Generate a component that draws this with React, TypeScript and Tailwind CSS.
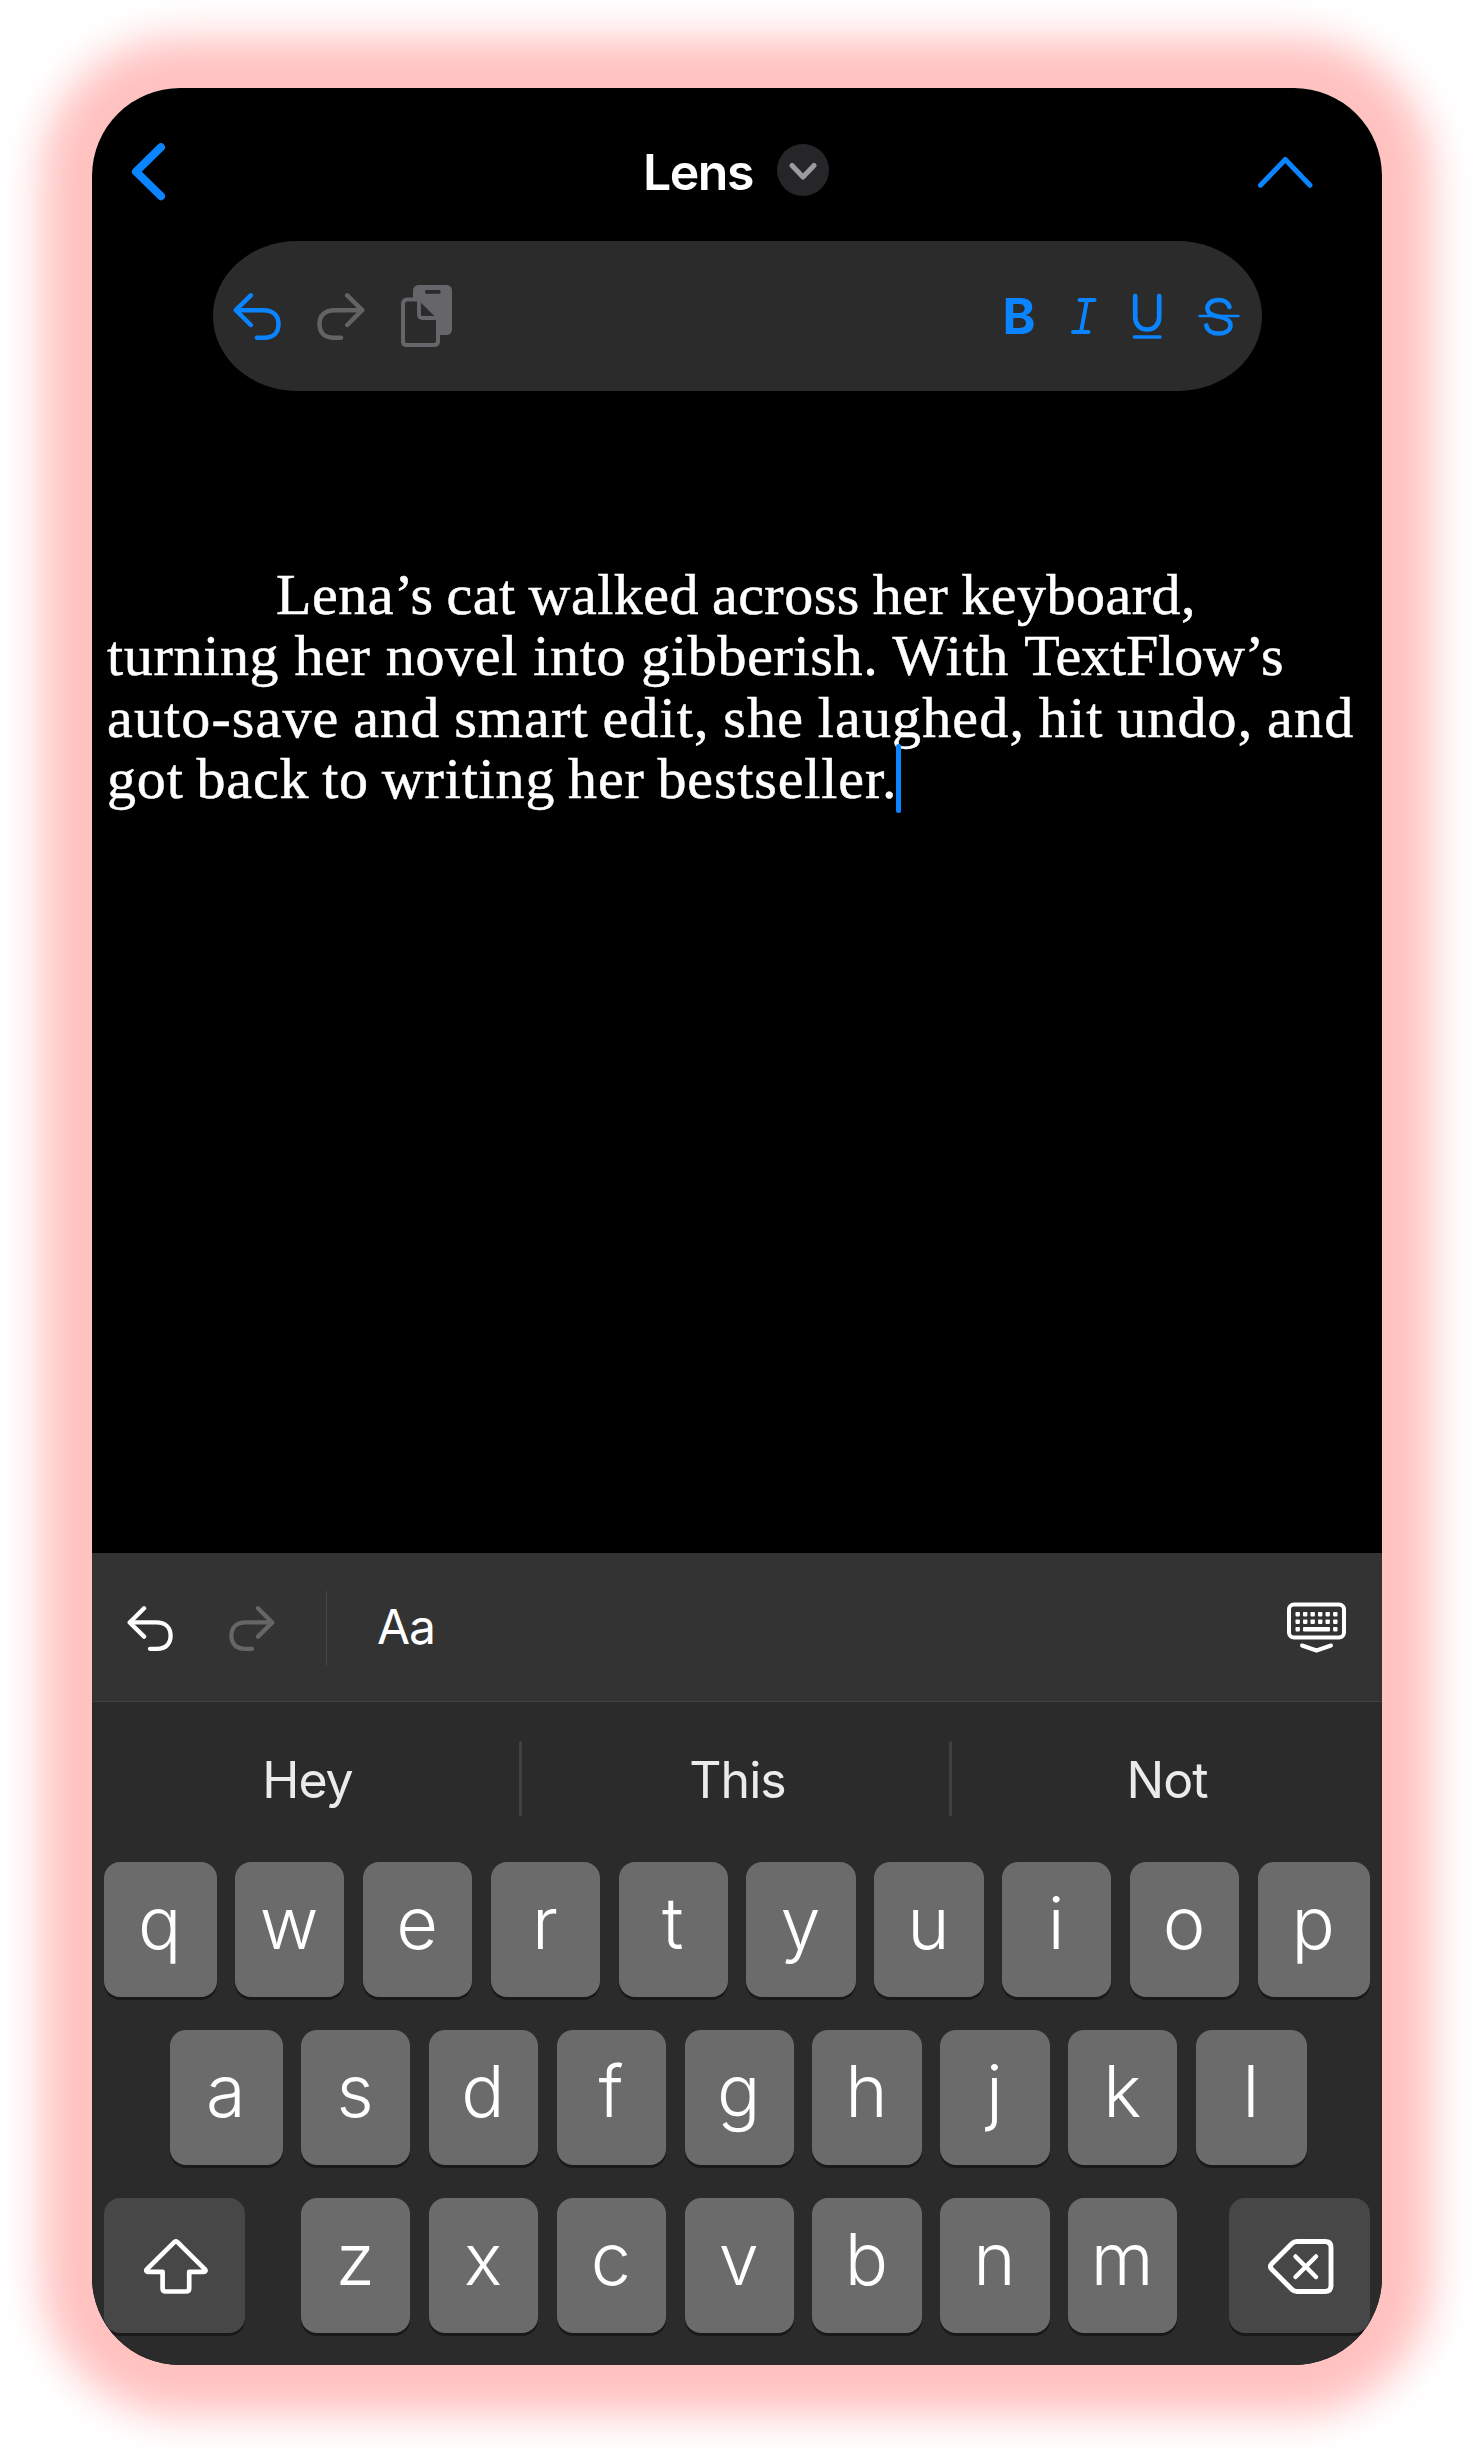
import type { ReactNode } from "react";

const BLUE = "#0a84ff";

function UndoArrow({ className, stroke, flip = false }: { className: string; stroke: string; flip?: boolean }) {
  return (
    <svg
      viewBox="0 0 48 48"
      className={className}
      fill="none"
      stroke={stroke}
      strokeWidth="4.5"
      strokeLinecap="round"
      strokeLinejoin="round"
    >
      <g transform={flip ? "matrix(-1 0 0 1 48 0)" : undefined}>
        <path d="M17.8 3.4 2.8 18.2l15 14.8" />
        <path d="M3.5 18.2h27c9.5 0 15 5.500 15 13.700s-4.800 13.800-14.300 13.800h-7.200" />
      </g>
    </svg>
  );
}

function ClipboardDocs() {
  return (
    <svg viewBox="0 0 51 64" className="h-[64px] w-[51px]" fill="none" strokeLinejoin="round">
      <rect x="12" y="1" width="39" height="50" rx="5.500" fill="#65656a" />
      <rect x="24" y="6" width="15.500" height="3.800" rx="1.500" fill="#2b2b2b" />
      <path
        d="M6.500 15.500H18L37 34v24.500q0 3.500-3.500 3.500h-27Q2 62 2 58.500v-39q0-4 4.500-4z"
        fill="#2b2b2b"
      />
      <path
        d="M17.800 15.500H6.500Q2 15.500 2 20v37.500Q2 61 6 61h27q4 0 4-4V34.500"
        stroke="#65656a"
        strokeWidth="4"
      />
      <path d="M18 15v15.500q0 3.500 3.500 3.500H37" stroke="#65656a" strokeWidth="3.800" />
      <path d="M18 15.500 37 34" stroke="#65656a" strokeWidth="2" />
    </svg>
  );
}

function FormatIcons() {
  const common = {
    fill: "none",
    stroke: BLUE,
    strokeLinecap: "round" as const,
    strokeLinejoin: "round" as const,
  };
  return (
    <>
      <svg viewBox="0 0 26 50" className="ml-[35px] h-[50px] w-[26px]" {...common} strokeWidth="4">
        <path d="M8.500 9H23.500M2 41H17.500M16 9 10 41" />
      </svg>
      <svg viewBox="0 0 30 50" className="ml-[35px] h-[50px] w-[30px]" {...common} strokeWidth="4.700">
        <path d="M3.200 5v21c0 7 4.500 12.500 12 12.500s12-5.500 12-12.500V5" />
        <path d="M2.500 46h25.500" strokeWidth="3.600" />
      </svg>
      <svg viewBox="0 0 42 50" className="ml-[36px] h-[50px] w-[42px]" {...common} strokeWidth="4.500">
        <path d="M31.500 16C30 11.500 26 9 20.500 9 14 9 9.300 12.500 9.300 17.500c0 4.500 3.500 6.500 9.500 7.800l4 .8c6.500 1.400 9.700 3.700 9.700 8.100 0 5-4.800 8.400-12 8.400-6.300 0-11.200-3-12.200-8.200" />
        <path d="M1.500 25h39" strokeWidth="2.400" />
      </svg>
    </>
  );
}

function KeyboardDismiss() {
  const columns = [8.500, 16, 23.500, 31, 38.500, 46.100];
  return (
    <svg viewBox="0 0 59 52" className="h-[52px] w-[59px]" fill="none">
      <rect x="2" y="2.500" width="55" height="33" rx="5" stroke="#fff" strokeWidth="4" />
      {columns.map((x) => (
        <g key={x} fill="#fff">
          <rect x={x} y="10" width="4.400" height="4.400" rx=".8" />
          <rect x={x} y="17.500" width="4.400" height="4.400" rx=".8" />
        </g>
      ))}
      <g fill="#fff">
        <rect x="8.500" y="25" width="4.400" height="4.400" rx=".8" />
        <rect x="16" y="25" width="27" height="4.400" rx=".8" />
        <rect x="46.100" y="25" width="4.400" height="4.400" rx=".8" />
      </g>
      <path d="m15 43.500 14.500 5 14.500-5" stroke="#fff" strokeWidth="4" strokeLinecap="round" strokeLinejoin="round" />
    </svg>
  );
}

function ShiftIcon() {
  return (
    <svg
      viewBox="0 0 64 55"
      className="h-[55px] w-[64px]"
      fill="none"
      stroke="#fff"
      strokeWidth="4.700"
      strokeLinejoin="round"
    >
      <path d="M30.300 3.200 3 30.200c-1.300 1.400-.8 2.600.8 2.600h14.800v16.400q0 3.300 3.300 3.300h20q3.300 0 3.300-3.300V32.800H60c1.600 0 2.100-1.200.8-2.600L33.500 3.200q-1.600-1.500-3.200 0z" />
    </svg>
  );
}

function DeleteIcon() {
  return (
    <svg
      viewBox="0 0 66 55"
      className="h-[55px] w-[66px]"
      fill="none"
      stroke="#fff"
      strokeWidth="4.900"
      strokeLinecap="round"
      strokeLinejoin="round"
    >
      <path d="M29 2.500h28q6 0 6 6v38q0 6-6 6H29q-3 0-5-2L3.500 30q-2.200-2.500 0-5L24 4.500q2-2 5-2z" />
      <path d="m27.500 17.500 20.500 20.500m0-20.500L27.500 38" strokeWidth="4.500" />
    </svg>
  );
}

function Key({ children, size = "w-[109.35px]" }: { children: ReactNode; size?: string }) {
  return (
    <button
      className={`${size} flex h-[135px] shrink-0 justify-center rounded-[16px] bg-[#6b6b6b] pt-[17px] pr-[1px] text-[72px] leading-[87px] font-[340] text-white shadow-[0_3px_0_#191919]`}
    >
      {children}
    </button>
  );
}

function ActionKey({ children, className }: { children: ReactNode; className: string }) {
  return (
    <button
      className={`${className} flex h-[135px] w-[141px] shrink-0 rounded-[16px] bg-[#474747] shadow-[0_3px_0_#191919]`}
    >
      {children}
    </button>
  );
}

function Header() {
  return (
    <header className="flex h-[153px] items-start">
      <svg
        viewBox="0 0 35 60"
        className="mt-[53px] ml-[39px] h-[60px] w-[35px]"
        fill="none"
        stroke={BLUE}
        strokeWidth="8"
        strokeLinecap="round"
        strokeLinejoin="round"
      >
        <path d="M30 6.200 5 30.700l25 24.500" />
      </svg>
      <h1 className="mt-[54px] ml-[477px] w-[134px] text-[50px] leading-[60px] font-semibold tracking-[-1.5px] text-white">
        Lens
      </h1>
      <span className="mt-[56px] flex size-[52px] items-center justify-center rounded-full bg-[#262628]">
        <svg
          viewBox="0 0 30 20"
          className="mt-[3px] h-[20px] w-[30px]"
          fill="none"
          stroke="#9b9ba1"
          strokeWidth="5"
          strokeLinecap="round"
          strokeLinejoin="round"
        >
          <path d="m4 3.500 11 11.500L26 3.500" />
        </svg>
      </span>
      <svg
        viewBox="0 0 60 36"
        className="mt-[66px] ml-[426px] h-[36px] w-[60px]"
        fill="none"
        stroke={BLUE}
        strokeWidth="5"
        strokeLinecap="round"
        strokeLinejoin="round"
      >
        <path d="M5.500 31.200 30.300 5.500 55 31.200" />
      </svg>
    </header>
  );
}

function FormatBar() {
  return (
    <div className="mx-auto flex h-[150px] w-[1049px] items-center rounded-[84px/75px] bg-[#2b2b2b]">
      <UndoArrow className="ml-[20px] h-[48px] w-[48px]" stroke={BLUE} />
      <UndoArrow className="ml-[36px] h-[48px] w-[48px]" stroke="#636366" flip />
      <div className="ml-[36px]">
        <ClipboardDocs />
      </div>
      <span className="ml-auto w-[33px] text-[50px] leading-[60px] font-bold text-[#0a84ff]">B</span>
      <FormatIcons />
      <div className="w-[22px]" />
    </div>
  );
}

function Document() {
  return (
    <main className="h-[1074px] pt-[85px] pl-[15px] font-['Liberation_Serif',serif] text-[58px] leading-[61.4px] whitespace-nowrap text-white [-webkit-text-stroke:0.5px_white]">
      <p className="pl-[169px] tracking-[0.5px] [word-spacing:-2.1px]">Lena’s cat walked across her keyboard,</p>
      <p className="tracking-[0.68px]">
        turning her novel into gibberish. With <span className="tracking-[-0.1px]">TextFlow’s</span>
      </p>
      <p className="tracking-[1.14px] [word-spacing:-1.9px]">auto-save and smart edit, she laughed, hit undo, and</p>
      <p className="flex tracking-[0.86px] [word-spacing:-2.6px]">
        <span className="w-[789px]">got back to writing her bestseller.</span>
        <span className="-mt-[4px] h-[69px] w-[5px] rounded-full bg-[#0a84ff]" />
      </p>
    </main>
  );
}

function Keyboard() {
  return (
    <section>
      <div className="flex h-[148px] items-start bg-[#333]">
        <UndoArrow className="mt-[52px] ml-[35px] h-[46px] w-[46px]" stroke="#ffffff" />
        <UndoArrow className="mt-[52px] ml-[56px] h-[46px] w-[46px]" stroke="#666668" flip />
        <div className="mt-[38px] ml-[51px] h-[75px] w-px bg-[#474747]" />
        <span className="mt-[44px] ml-[50px] text-[48px] leading-[60px] tracking-[-1px] text-white">Aa</span>
        <div className="mt-[49px] mr-[36px] ml-auto">
          <KeyboardDismiss />
        </div>
      </div>
      <div className="flex h-[161px] items-start border-t border-[#414141] bg-[#2b2b2b] text-[50px] leading-[60px] tracking-[-1px] text-[#ebebeb]">
        <span className="mt-[48px] w-[427px] pl-[4px] text-center">Hey</span>
        <div className="mt-[39px] h-[75px] w-[3px] rounded-full bg-[#414141]" />
        <span className="mt-[48px] w-[427px] pl-[4px] text-center">This</span>
        <div className="mt-[39px] h-[75px] w-[3px] rounded-full bg-[#414141]" />
        <span className="mt-[48px] w-[430px] text-center">Not</span>
      </div>
      <div className="flex h-[503px] flex-col gap-[33px] bg-[#2b2b2b]">
        <div className="flex gap-[18.5px] pl-[12px]">
          <Key size="w-[112.5px]">q</Key>
          {["w", "e", "r", "t", "y", "u", "i", "o"].map((c) => (
            <Key key={c}>{c}</Key>
          ))}
          <Key size="w-[112px]">p</Key>
        </div>
        <div className="flex gap-[18.5px] pl-[78px]">
          <Key size="w-[112.5px]">a</Key>
          {["s", "d", "f", "g", "h", "j", "k"].map((c) => (
            <Key key={c}>{c}</Key>
          ))}
          <Key size="w-[111px]">l</Key>
        </div>
        <div className="flex pl-[12px]">
          <ActionKey className="pt-[41px] pl-[40px]">
            <ShiftIcon />
          </ActionKey>
          <div className="mr-[52px] ml-[56px] flex gap-[18.5px]">
            {["z", "x", "c", "v", "b", "n", "m"].map((c) => (
              <Key key={c}>{c}</Key>
            ))}
          </div>
          <ActionKey className="pt-[41px] pl-[39px]">
            <DeleteIcon />
          </ActionKey>
        </div>
      </div>
    </section>
  );
}

export default function App() {
  return (
    <div className="h-[2461px] w-[1474px] overflow-hidden bg-white pt-[88px] pl-[92px] font-['Inter',sans-serif]">
      <div className="h-[2277px] w-[1290px] rounded-[88px] shadow-[0_0_42px_50px_#ffc2c0]">
        <div className="flex h-full flex-col overflow-hidden rounded-[88px] bg-black">
          <Header />
          <FormatBar />
          <div className="h-[88px]" />
          <Document />
          <Keyboard />
        </div>
      </div>
    </div>
  );
}
